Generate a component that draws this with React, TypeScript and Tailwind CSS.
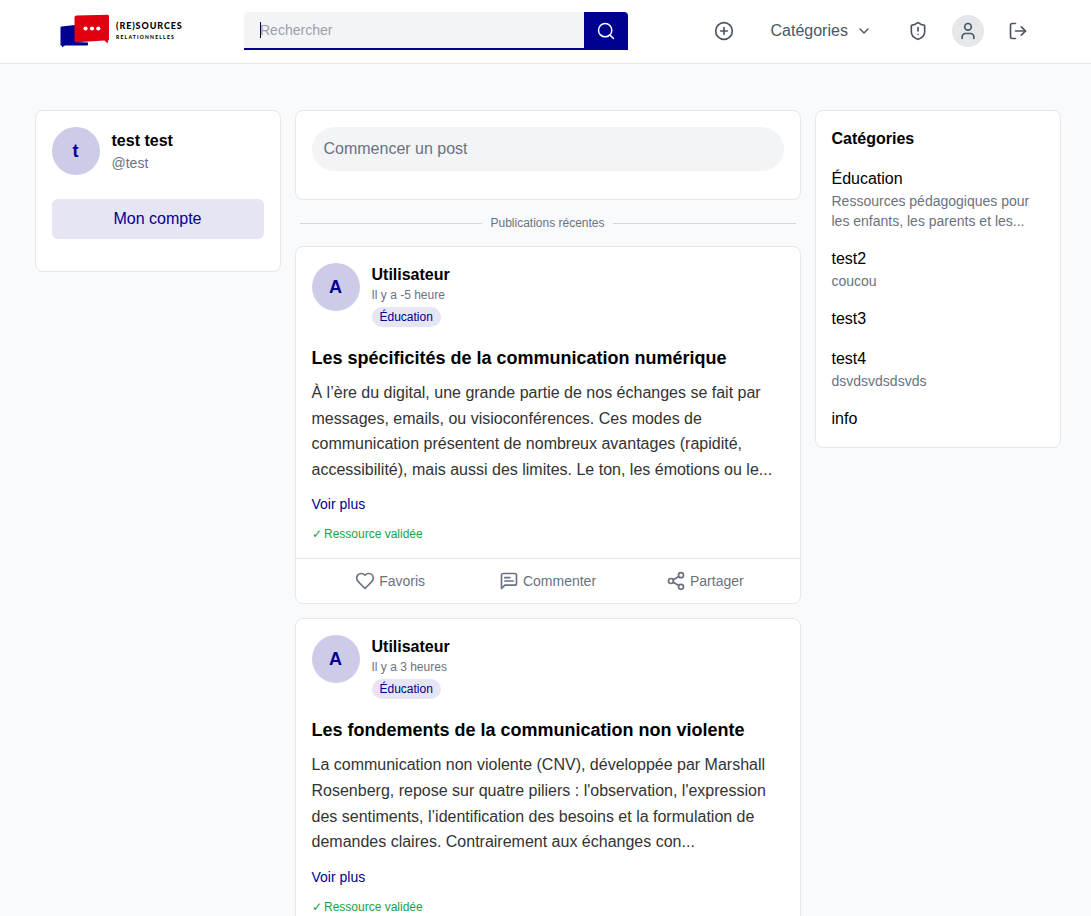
import { CirclePlus, ChevronDown, ShieldAlert, User, LogOut, Search, Share2 } from 'lucide-react';

type PostData = { time: string; title: string; lines: string[] };

const posts: PostData[] = [
  {
    time: 'Il y a -5 heure',
    title: 'Les spécificités de la communication numérique',
    lines: [
      'À l’ère du digital, une grande partie de nos échanges se fait par',
      'messages, emails, ou visioconférences. Ces modes de',
      'communication présentent de nombreux avantages (rapidité,',
      'accessibilité), mais aussi des limites. Le ton, les émotions ou le...',
    ],
  },
  {
    time: 'Il y a 3 heures',
    title: 'Les fondements de la communication non violente',
    lines: [
      'La communication non violente (CNV), développée par Marshall',
      "Rosenberg, repose sur quatre piliers : l'observation, l'expression",
      'des sentiments, l’identification des besoins et la formulation de',
      'demandes claires. Contrairement aux échanges con...',
    ],
  },
];

const categories = [
  { name: 'Éducation', lines: ['Ressources pédagogiques pour', 'les enfants, les parents et les...'] },
  { name: 'test2', lines: ['coucou'] },
  { name: 'test3', lines: [] },
  { name: 'test4', lines: ['dsvdsvdsdsvds'] },
  { name: 'info', lines: [] },
];

function Logo() {
  return (
    <div className="flex w-[130px] items-center pb-0.5">
      <svg className="h-[34px] w-[50px] shrink-0" viewBox="0 0 50 34" aria-hidden="true">
        <path d="M0.500 13.500Q0.500 12.500 1.500 12.400L15 11V28L28 28.500V30.500Q28 31.500 27 31.500H5L2 33.300V31.800H1.500Q0.500 31.800 0.500 30.800Z" fill="#000091" />
        <path d="M16.500 1.500L47.500 0.800Q49 0.800 49 2.300V25Q49 26.500 48 26.500L47.700 29.500L44.500 26.500L17 28.200Q14.500 28.200 14.500 26.500V3.500Q14.500 1.500 16.500 1.500Z" fill="#e1000f" />
        <circle cx="25.500" cy="14.500" r="2.100" fill="white" />
        <circle cx="32" cy="14.500" r="2.100" fill="white" />
        <circle cx="38.300" cy="14.500" r="2.100" fill="white" />
      </svg>
      <div className="ml-1.5 flex flex-col whitespace-nowrap font-['Lato',sans-serif] font-black text-black">
        <span className="text-[9px] leading-[10px] tracking-[0.9px]">(RE)SOURCES</span>
        <span className="mt-[3px] text-[5px] leading-[6px] tracking-[1.22px]">RELATIONNELLES</span>
      </div>
    </div>
  );
}

function Header() {
  return (
    <header className="flex h-16 items-center border-b border-gray-200 bg-white pl-[60px] text-[#4b5563]">
      <Logo />
      <div className="mb-0.5 ml-[54px] flex h-[38px] w-96 overflow-hidden rounded-t">
        <div className="flex flex-1 items-center border-b-2 border-[#000091] bg-gray-100 pl-4">
          <span className="h-4 w-px bg-black" />
          <span className="-ml-px text-sm text-gray-400">Rechercher</span>
        </div>
        <button className="flex w-11 items-center justify-center bg-[#000091] text-white">
          <Search size={20} strokeWidth={1.8} />
        </button>
      </div>
      <nav className="ml-[86px] flex items-center pb-0.5">
        <CirclePlus size={20} />
        <span className="ml-[36.5px] text-base">Catégories</span>
        <ChevronDown className="ml-2" size={16} />
        <ShieldAlert className="ml-9" size={20} />
        <span className="ml-6 flex size-8 items-center justify-center rounded-full bg-gray-200">
          <User size={20} />
        </span>
        <LogOut className="ml-6" size={20} />
      </nav>
    </header>
  );
}

function Avatar({ letter }: { letter: string }) {
  return (
    <div className="flex size-12 shrink-0 items-center justify-center rounded-full bg-[#cccce9] text-lg font-bold text-[#000091]">
      {letter}
    </div>
  );
}

function HeartIcon() {
  return (
    <svg className="size-5" viewBox="0 0 24 24" fill="none" stroke="currentColor" strokeWidth="2" strokeLinecap="round" strokeLinejoin="round" aria-hidden="true">
      <path d="M19 14c1.490-1.460 3-3.210 3-5.500A5.500 5.500 0 0 0 16.500 3c-1.760 0-3 .5-4.500 2-1.500-1.500-2.740-2-4.500-2A5.500 5.500 0 0 0 2 8.500c0 2.300 1.500 4.050 3 5.500l7 7Z" />
    </svg>
  );
}

function CommentIcon() {
  return (
    <svg className="size-5" viewBox="0 0 24 24" fill="none" stroke="currentColor" strokeWidth="2" strokeLinecap="round" strokeLinejoin="round" aria-hidden="true">
      <path d="M21 15a2 2 0 0 1-2 2H7l-4 4V5a2 2 0 0 1 2-2h14a2 2 0 0 1 2 2z" />
      <path d="M13 8H7" />
      <path d="M17 12H7" />
    </svg>
  );
}

function Post({ post }: { post: PostData }) {
  return (
    <article className="rounded-lg border border-gray-200 bg-white">
      <div className="h-[311.4px] px-4 pt-4">
        <div className="flex gap-3">
          <Avatar letter="A" />
          <div className="pt-px">
            <h3 className="text-base leading-[22px] font-bold text-black">Utilisateur</h3>
            <p className="mt-px text-xs text-gray-500">{post.time}</p>
            <span className="mt-1 block w-fit rounded-full bg-[#e5e5f4] px-2 py-0.5 text-xs text-[#000091]">Éducation</span>
          </div>
        </div>
        <h2 className="mt-[17px] text-lg leading-7 font-bold text-black">{post.title}</h2>
        <p className="mt-2 text-base leading-[1.6] whitespace-nowrap text-[#333333]">
          {post.lines.map((line) => (
            <span key={line} className="block">{line}</span>
          ))}
        </p>
        <p className="mt-3 text-sm text-[#000091]">Voir plus</p>
        <p className="mt-3 flex text-xs text-[#16a34a]">
          <span className="w-[12.5px]">✓</span>
          <span>Ressource validée</span>
        </p>
      </div>
      <div className="grid h-[45px] grid-cols-3 items-center border-t border-gray-200 px-4 text-sm text-gray-500">
        <span className="flex items-center justify-center gap-1"><HeartIcon />Favoris</span>
        <span className="flex items-center justify-center gap-1"><CommentIcon />Commenter</span>
        <span className="flex items-center justify-center gap-1"><Share2 size={20} />Partager</span>
      </div>
    </article>
  );
}

export default function App() {
  return (
    <div className="h-[916px] overflow-hidden bg-gray-50 font-['Liberation_Sans',Arial,sans-serif]">
      <Header />
      <main className="flex items-start gap-3.5 pt-[46px] pl-[34.5px]">
        <aside className="h-[162px] w-[246px] rounded-lg border border-gray-200 bg-white p-4">
          <div className="flex gap-3">
            <Avatar letter="t" />
            <div className="pt-0.5">
              <p className="text-base leading-6 font-bold text-black">test test</p>
              <p className="text-sm text-gray-500">@test</p>
            </div>
          </div>
          <button className="mt-6 h-10 w-full rounded-md bg-[#e5e5f4] text-base text-[#000091]">Mon compte</button>
        </aside>
        <section className="flex w-[506px] flex-col">
          <div className="h-[90px] rounded-lg border border-gray-200 bg-white p-4">
            <div className="flex h-11 items-center rounded-full bg-gray-100 px-3 text-base text-gray-500">Commencer un post</div>
          </div>
          <div className="my-[15px] flex h-4 items-center gap-2 px-[5px] text-xs text-gray-500">
            <span className="h-px flex-1 bg-gray-300" />
            Publications récentes
            <span className="h-px flex-1 bg-gray-300" />
          </div>
          <div className="flex flex-col gap-3.5">
            {posts.map((post) => <Post key={post.title} post={post} />)}
          </div>
        </section>
        <aside className="h-[338px] w-[246px] rounded-lg border border-gray-200 bg-white p-4">
          <h2 className="text-base leading-6 font-bold text-black">Catégories</h2>
          <ul className="mt-4 flex flex-col gap-4">
            {categories.map((category) => (
              <li key={category.name}>
                <p className="text-base leading-6 text-black">{category.name}</p>
                {category.lines.map((line) => (
                  <p key={line} className="text-sm leading-5 text-gray-500">{line}</p>
                ))}
              </li>
            ))}
          </ul>
        </aside>
      </main>
    </div>
  );
}
